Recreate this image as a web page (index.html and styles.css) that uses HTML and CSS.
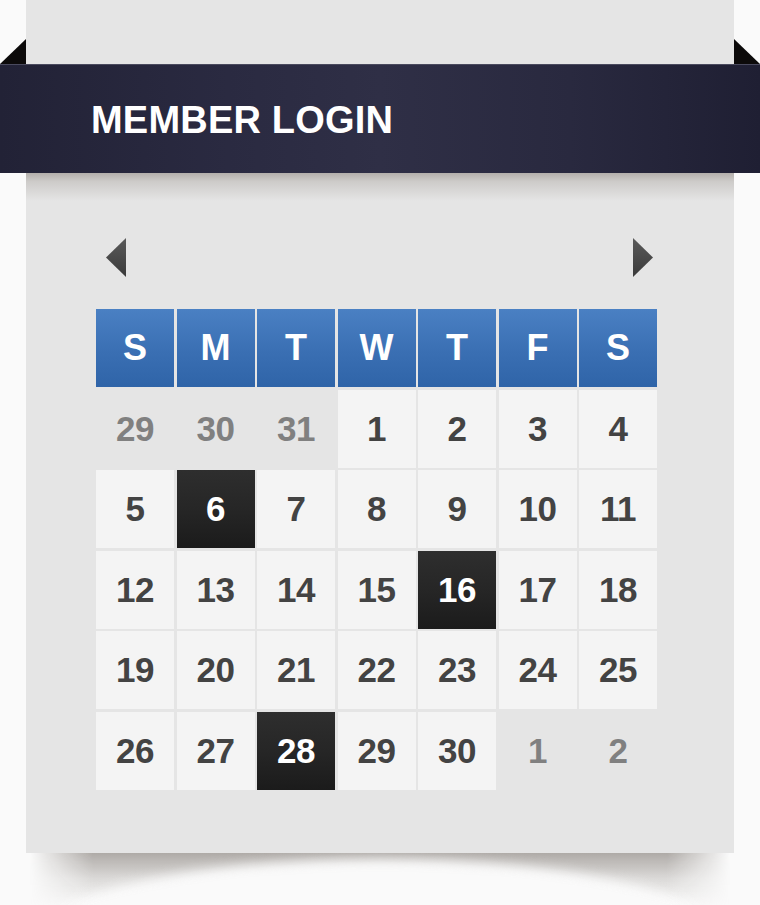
FILE: index.html
```html
<!DOCTYPE html>
<html>
<head>
<meta charset="utf-8">
<title>Member Login Calendar</title>
<link rel="stylesheet" href="styles.css">
</head>
<body>
<div class="page">
  <div class="card">
    <div class="ribbon">
      <span class="fold fold-left"></span>
      <span class="fold fold-right"></span>
      <h1 class="title">MEMBER LOGIN</h1>
    </div>
    <div class="ribbon-shadow"></div>
    <div class="nav">
      <svg class="arrow" width="20" height="39" viewBox="0 0 20 39"><defs><linearGradient id="ga" x1="0" y1="0" x2="0" y2="1"><stop offset="0" stop-color="#5a5a5a"/><stop offset="1" stop-color="#3a3a3a"/></linearGradient></defs><polygon points="20,0 20,39 0,19.5" fill="url(#ga)"/></svg>
      <svg class="arrow" width="20" height="39" viewBox="0 0 20 39"><defs><linearGradient id="gb" x1="0" y1="0" x2="0" y2="1"><stop offset="0" stop-color="#5a5a5a"/><stop offset="1" stop-color="#3a3a3a"/></linearGradient></defs><polygon points="0,0 0,39 20,19.5" fill="url(#gb)"/></svg>
    </div>
    <div class="grid">
      <div class="head">S</div><div class="head">M</div><div class="head">T</div><div class="head">W</div><div class="head">T</div><div class="head">F</div><div class="head">S</div>
      <div class="day out">29</div><div class="day out">30</div><div class="day out">31</div><div class="day">1</div><div class="day">2</div><div class="day">3</div><div class="day">4</div>
      <div class="day">5</div><div class="day sel">6</div><div class="day">7</div><div class="day">8</div><div class="day">9</div><div class="day">10</div><div class="day">11</div>
      <div class="day">12</div><div class="day">13</div><div class="day">14</div><div class="day">15</div><div class="day sel">16</div><div class="day">17</div><div class="day">18</div>
      <div class="day">19</div><div class="day">20</div><div class="day">21</div><div class="day">22</div><div class="day">23</div><div class="day">24</div><div class="day">25</div>
      <div class="day">26</div><div class="day">27</div><div class="day sel">28</div><div class="day">29</div><div class="day">30</div><div class="day out">1</div><div class="day out">2</div>
    </div>
  </div>
  <div class="curl"></div>
</div>
</body>
</html>
```

FILE: styles.css
```css
html, body {
  margin: 0;
  padding: 0;
  background: #fafafa;
}
body {
  font-family: "Liberation Sans", Arial, sans-serif;
}
.page {
  width: 760px;
  height: 905px;
  overflow: hidden;
}
.card {
  margin: 0 26px;
  height: 853px;
  background: #e5e5e5;
  padding-top: 64px;
  box-sizing: border-box;
}
.ribbon {
  position: relative;
  margin: 0 -26px;
  height: 109px;
  background: linear-gradient(to right, #222236 0%, #2a2a41 30%, #2f2f46 50%, #29293f 75%, #1f1f33 100%);
  border-top: 1px solid #4a4a5e;
  box-sizing: border-box;
  display: flex;
  align-items: center;
  padding-left: 91px;
}
.fold {
  position: absolute;
  top: -26px;
  width: 0;
  height: 0;
  border-bottom: 25px solid #0c0a0a;
}
.fold-left {
  left: 0;
  border-left: 26px solid transparent;
}
.fold-right {
  right: 0;
  border-right: 26px solid transparent;
}
.title {
  margin: 0;
  margin-top: 3px;
  color: #ffffff;
  font-size: 38px;
  font-weight: bold;
  letter-spacing: 0.2px;
}
.ribbon-shadow {
  height: 28px;
  background: linear-gradient(to bottom, #b3afab 0%, #cdcbc9 30%, #e5e5e5 100%);
}
.nav {
  margin: 37px 0 0 70px;
  width: 561px;
  padding: 0 4px 0 10px;
  box-sizing: border-box;
  display: flex;
  justify-content: space-between;
  height: 39px;
}
.arrow {
  display: block;
}
.grid {
  margin: 32px 0 0 70px;
  width: 561px;
  display: grid;
  grid-template-columns: repeat(7, 78px);
  grid-auto-rows: 78px;
  gap: 2.5px;
}
.head, .day {
  display: flex;
  align-items: center;
  justify-content: center;
  font-weight: bold;
}
.head {
  background: linear-gradient(to bottom, #4a80c3 0%, #3a6fb3 55%, #2f64a8 100%);
  color: #ffffff;
  font-size: 36px;
}
.day {
  background: #f4f4f4;
  color: #434343;
  font-size: 35px;
  letter-spacing: -0.5px;
}
.day.out {
  background: transparent;
  color: #808080;
}
.day.sel {
  background: linear-gradient(to bottom, #2e2e2e 0%, #262626 50%, #1b1b1b 100%);
  color: #ffffff;
}
.curl {
  position: relative;
  margin: 0 30px;
  height: 52px;
  background: linear-gradient(to bottom, rgba(125, 118, 112, 0.6) 0%, rgba(150, 145, 140, 0.3) 50%, rgba(190, 186, 182, 0.08) 100%);
  -webkit-mask-image: linear-gradient(to right, transparent 0%, #000 9%, #000 91%, transparent 100%);
  mask-image: linear-gradient(to right, transparent 0%, #000 9%, #000 91%, transparent 100%);
  overflow: hidden;
}
.curl::after {
  content: "";
  position: absolute;
  left: -10px;
  top: 6px;
  width: 720px;
  height: 180px;
  border-radius: 50%;
  background: #fafafa;
  filter: blur(6px);
}
```
